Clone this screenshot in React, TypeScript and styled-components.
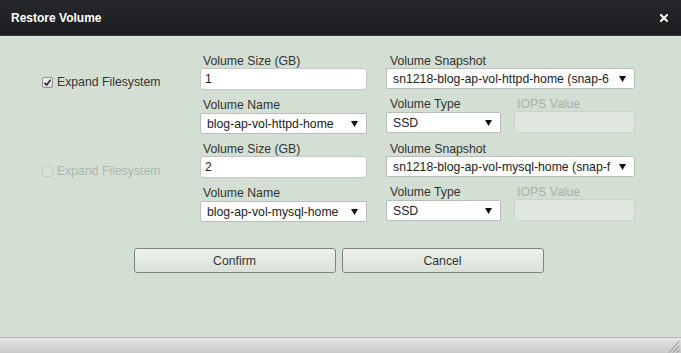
import React from "react";
import styled, { createGlobalStyle } from "styled-components";

const GlobalStyle = createGlobalStyle`
  html, body { margin: 0; padding: 0; }
  body {
    width: 681px;
    height: 353px;
    overflow: hidden;
    font-family: Arial, "Liberation Sans", sans-serif;
    font-size: 12.25px;
  }
`;

const Dialog = styled.div`
  width: 681px;
  height: 353px;
  display: flex;
  flex-direction: column;
  background: #d4dfd4;
`;

const Header = styled.div`
  height: 35px;
  flex: none;
  display: flex;
  align-items: center;
  justify-content: space-between;
  padding: 0 13px 0 11px;
  background: linear-gradient(#26282b, #1c1d1f);
  border-bottom: 1px solid #3a3c3f;
`;

const Title = styled.div`
  color: #ffffff;
  font-weight: bold;
  font-size: 12px;
`;

const CloseButton = styled.div`
  width: 8px;
  height: 8px;
  display: flex;
  cursor: pointer;
`;

const Body = styled.div`
  flex: 1;
  display: flex;
  flex-direction: column;
  padding-top: 18px;
`;

const Group = styled.div`
  display: grid;
  grid-template-columns: 139px 167px 249px;
  column-gap: 19px;
  padding-left: 42px;
  margin-bottom: 8px;
`;

const CheckRow = styled.label<{ $disabled?: boolean }>`
  display: flex;
  align-items: center;
  gap: 4px;
  height: 14px;
  margin-top: ${(p) => (p.$disabled ? 22 : 21)}px;
  color: ${(p) => (p.$disabled ? "#adb6ad" : "#333")};
  white-space: nowrap;
`;

const CheckBox = styled.span<{ $disabled?: boolean }>`
  width: 11px;
  height: 11px;
  box-sizing: border-box;
  border-radius: 2px;
  border: 1px solid ${(p) => (p.$disabled ? "#c3cbc3" : "#8e8e8e")};
  background: ${(p) =>
    p.$disabled ? "#d8e1d8" : "linear-gradient(#f6f6f6, #dadada)"};
  display: flex;
  align-items: center;
  justify-content: center;
`;

const Column = styled.div`
  display: flex;
  flex-direction: column;
  min-width: 0;
`;

const FieldLabel = styled.div<{ $indent?: number; $gap?: number; $disabled?: boolean }>`
  line-height: 14px;
  height: 14px;
  padding-left: ${(p) => p.$indent ?? 3}px;
  margin-top: ${(p) => p.$gap ?? 0}px;
  color: ${(p) => (p.$disabled ? "#a7b1a7" : "#333")};
  white-space: nowrap;
`;

const TextInput = styled.input<{ $gap?: number }>`
  box-sizing: border-box;
  width: 100%;
  height: 22px;
  margin: ${(p) => p.$gap ?? 0}px 0 0 0;
  border: 1px solid #c3c9c3;
  border-radius: 3px;
  background: #ffffff;
  padding: 0 4px;
  font-family: Arial, "Liberation Sans", sans-serif;
  font-size: 12.25px;
  color: #222;
  outline: none;
  &:disabled {
    background: #dfe7df;
    border-color: #cbd3cb;
  }
`;

const SelectBox = styled.div<{ $gap?: number }>`
  box-sizing: border-box;
  height: 21px;
  margin-top: ${(p) => p.$gap ?? 1}px;
  border: 1px solid #b8bfb8;
  border-radius: 2px;
  background: #ffffff;
  display: flex;
  align-items: center;
  padding: 0 8px 0 6px;
  color: #222;
  cursor: default;
`;

const SelectText = styled.span`
  flex: 1;
  overflow: hidden;
  white-space: nowrap;
  margin-right: 8px;
`;

const Arrow = styled.svg`
  flex: none;
  width: 7px;
  height: 6px;
`;

const SubRow = styled.div`
  display: grid;
  grid-template-columns: 115px 121px;
  column-gap: 13px;
  margin-top: 8px;
`;

const ButtonRow = styled.div`
  display: flex;
  justify-content: center;
  gap: 6px;
  margin-top: 18px;
  padding-right: 4px;
`;

const Button = styled.button`
  width: 202px;
  height: 25px;
  box-sizing: border-box;
  border: 1px solid #7f847f;
  border-radius: 3px;
  background: linear-gradient(#eef2ee, #d8e1d8);
  color: #333;
  font-family: Arial, "Liberation Sans", sans-serif;
  font-size: 12.25px;
  padding: 0;
  cursor: pointer;
`;

const Footer = styled.div`
  height: 15px;
  flex: none;
  border-top: 1px solid #b6b6b6;
  background: linear-gradient(#e4e4e4, #c9c9c9);
  display: flex;
  justify-content: flex-end;
  align-items: flex-end;
`;

const Grip = styled.svg`
  width: 12px;
  height: 13px;
  margin-right: 1px;
`;

const ArrowIcon = () => (
  <Arrow viewBox="0 0 7 6">
    <polygon points="0,0 7,0 3.5,6" fill="#111" />
  </Arrow>
);

const Select = ({ value, gap }: { value: string; gap?: number }) => (
  <SelectBox $gap={gap}>
    <SelectText>{value}</SelectText>
    <ArrowIcon />
  </SelectBox>
);

type VolumeProps = {
  size: string;
  name: string;
  snapshot: string;
  checked: boolean;
  disabled?: boolean;
};

const VolumeGroup = ({ size, name, snapshot, checked, disabled }: VolumeProps) => (
  <Group>
    <div>
      <CheckRow $disabled={disabled}>
        <CheckBox $disabled={disabled}>
          {checked && (
            <svg width="9" height="9" viewBox="0 0 9 9">
              <path d="M1.5 4.8 L3.6 7 L7.6 1.8" fill="none" stroke="#2b2b2b" strokeWidth="1.7" />
            </svg>
          )}
        </CheckBox>
        Expand Filesystem
      </CheckRow>
    </div>
    <Column>
      <FieldLabel>Volume Size (GB)</FieldLabel>
      <TextInput defaultValue={size} />
      <FieldLabel $gap={8}>Volume Name</FieldLabel>
      <Select value={name} />
    </Column>
    <Column>
      <FieldLabel $indent={4}>Volume Snapshot</FieldLabel>
      <Select value={snapshot} gap={0} />
      <SubRow>
        <Column>
          <FieldLabel $indent={4}>Volume Type</FieldLabel>
          <Select value="SSD" />
        </Column>
        <Column>
          <FieldLabel $indent={3} $disabled>IOPS Value</FieldLabel>
          <TextInput disabled />
        </Column>
      </SubRow>
    </Column>
  </Group>
);

export default function App() {
  return (
    <>
      <GlobalStyle />
      <Dialog>
        <Header>
          <Title>Restore Volume</Title>
          <CloseButton>
            <svg width="8" height="8" viewBox="0 0 8 8">
              <path d="M1 1 L7 7 M7 1 L1 7" stroke="#fff" strokeWidth="2" strokeLinecap="square" />
            </svg>
          </CloseButton>
        </Header>
        <Body>
          <VolumeGroup
            size="1"
            name="blog-ap-vol-httpd-home"
            snapshot="sn1218-blog-ap-vol-httpd-home (snap-6"
            checked
          />
          <VolumeGroup
            size="2"
            name="blog-ap-vol-mysql-home"
            snapshot="sn1218-blog-ap-vol-mysql-home (snap-f"
            checked={false}
            disabled
          />
          <ButtonRow>
            <Button>Confirm</Button>
            <Button>Cancel</Button>
          </ButtonRow>
        </Body>
        <Footer>
          <Grip viewBox="0 0 12 13">
            <path d="M1 12.5 L11.5 1 M5 12.5 L11.5 5.5 M9 12.5 L11.5 10" stroke="#8a8a8a" strokeWidth="1" />
          </Grip>
        </Footer>
      </Dialog>
    </>
  );
}
